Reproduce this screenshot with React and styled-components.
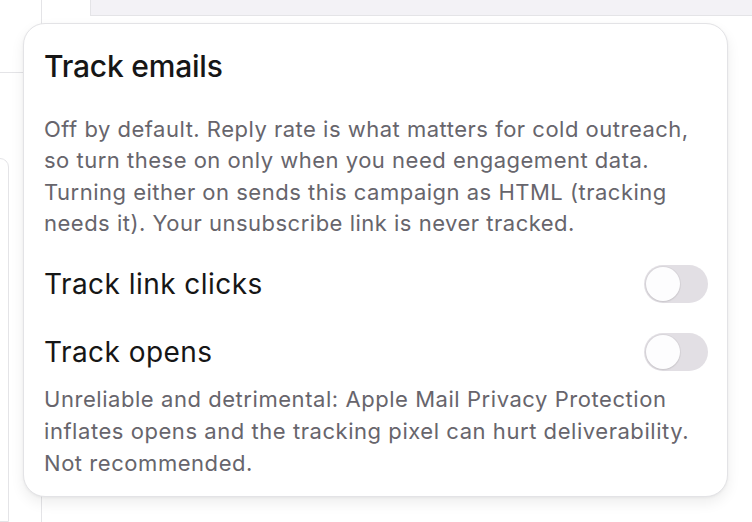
import styled, { createGlobalStyle } from 'styled-components';

const GlobalStyle = createGlobalStyle`
  html, body {
    margin: 0;
    padding: 0;
    background: #ffffff;
    font-family: Inter, "Liberation Sans", sans-serif;
  }
  #root {
    height: 522px;
    overflow: hidden;
  }
`;

function Toggle({ on }) {
  return (
    <Switch role="switch" aria-checked={on} $on={on}>
      <Knob $on={on} />
    </Switch>
  );
}

function App() {
  return (
    <>
      <GlobalStyle />
      <Page>
        <Rail>
          <RailHeader />
          <RailCard />
        </Rail>
        <Main>
          <TopBar />
        </Main>

        <Popover>
          <Title>Track emails</Title>
          <Description>
            Off by default. Reply rate is what matters for cold outreach, so turn these on only
            when you need engagement data. Turning either on sends this campaign as HTML
            (tracking needs it). Your unsubscribe link is never tracked.
          </Description>

          <OptionRow $gap={26}>
            <OptionLabel>Track link clicks</OptionLabel>
            <Toggle on={false} />
          </OptionRow>
          <OptionRow $gap={30}>
            <OptionLabel>Track opens</OptionLabel>
            <Toggle on={false} />
          </OptionRow>
          <Note>
            Unreliable and detrimental: Apple Mail Privacy Protection inflates opens and the
            tracking pixel can hurt deliverability. Not recommended.
          </Note>
        </Popover>
      </Page>
    </>
  );
}

export default App;

const Page = styled.div`
  position: relative;
  display: flex;
  height: 522px;
  background: #ffffff;
`;

const Rail = styled.div`
  width: 41px;
  flex-shrink: 0;
  border-right: 1px solid #e4e4e7;
  display: flex;
  flex-direction: column;
  overflow: hidden;
`;

const RailHeader = styled.div`
  height: 72px;
  border-bottom: 1px solid #e4e4e7;
  margin-right: 17px;
`;

const RailCard = styled.div`
  margin-top: 85px;
  margin-left: -100px;
  width: 107px;
  flex: 1;
  border: 1px solid #e4e4e7;
  border-radius: 0 9px 0 0;
`;

const Main = styled.div`
  width: 686px;
  flex-shrink: 0;
  border-right: 1px solid #e4e4e7;
  padding-left: 48px;
`;

const TopBar = styled.div`
  height: 15px;
  background: #f3f2f6;
  border-left: 1px solid #e4e4e7;
  border-bottom: 1px solid #e4e4e7;
`;

const Popover = styled.div`
  position: absolute;
  left: 23px;
  top: 23px;
  width: 705px;
  height: 474px;
  box-sizing: border-box;
  padding: 22px 19px 0 20px;
  background: #ffffff;
  border: 1px solid #e3e3e6;
  border-radius: 22px;
  box-shadow: 0 6px 14px rgba(0, 0, 0, 0.07), 0 1px 3px rgba(0, 0, 0, 0.05);
`;

const Title = styled.div`
  font-size: 30px;
  line-height: 40px;
  font-weight: 500;
  color: #161616;
  letter-spacing: -0.2px;
`;

const Description = styled.p`
  margin: 28px 0 0 0;
  max-width: 660px;
  font-size: 22px;
  line-height: 31.3px;
  letter-spacing: 0.5px;
  color: #67656c;
`;

const OptionRow = styled.div`
  display: flex;
  align-items: center;
  justify-content: space-between;
  margin-top: ${(p) => p.$gap}px;
`;

const OptionLabel = styled.span`
  font-size: 28px;
  line-height: 38px;
  letter-spacing: 0.45px;
  color: #161616;
`;

const Switch = styled.div`
  width: 64px;
  height: 38px;
  box-sizing: border-box;
  padding: 2px;
  border-radius: 19px;
  background: ${(p) => (p.$on ? '#5b5bd6' : '#e2dfe4')};
  display: flex;
  justify-content: ${(p) => (p.$on ? 'flex-end' : 'flex-start')};
`;

const Knob = styled.div`
  width: 34px;
  height: 34px;
  border-radius: 50%;
  background: #fdfdfe;
  box-shadow: 0 0 0 1px rgba(0, 0, 0, 0.04), 0 1px 2px rgba(0, 0, 0, 0.08);
`;

const Note = styled.p`
  margin: 12px 0 0 0;
  font-size: 22px;
  line-height: 32px;
  letter-spacing: 0.55px;
  color: #67656c;
`;
